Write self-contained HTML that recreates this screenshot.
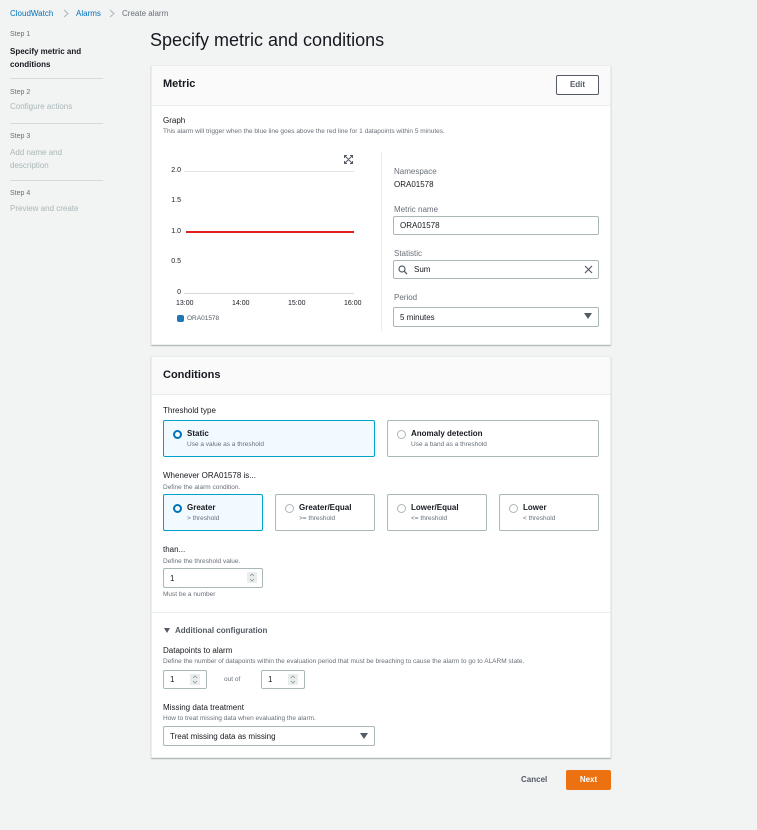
<!DOCTYPE html>
<html><head><meta charset="utf-8"><style>
*{box-sizing:border-box;margin:0;padding:0}
body{width:757px;height:830px;background:#f2f3f3;font-family:"Liberation Sans",sans-serif;color:#16191f;position:relative;overflow:hidden;font-size:8px}
.a{position:absolute;white-space:nowrap}
.lnk{color:#0073bb}
.g{color:#687078}
.lg{color:#aab7b8}
.b{font-weight:bold}
.panel{position:absolute;left:151px;width:460px;background:#fff;border:1px solid #eaeded;box-shadow:0 1px 1px rgba(0,28,36,.3)}
.ph{position:absolute;left:0;right:0;top:0;background:#fafafa;border-bottom:1px solid #eaeded}
.inp{position:absolute;border:1px solid #aab7b8;border-radius:2px;background:#fff;font-size:8px;padding-left:6px;display:flex;align-items:center}
.tile{position:absolute;border:1px solid #aab7b8;border-radius:2px;background:#fff;height:37px}
.tile.sel{border-color:#00a1c9;background:#f1faff}
.rad{position:absolute;left:9px;top:9px;width:9px;height:9px;border-radius:50%;border:1px solid #aab7b8;background:#fff}
.sel .rad{border:2.5px solid #0073bb}
.tt{position:absolute;left:23px;top:8px;font-size:8px;font-weight:bold;color:#16191f}
.ts{position:absolute;left:23px;top:20px;font-size:6.5px;color:#687078}
.spin{position:absolute;right:5px;top:3px;width:10px;height:11px;background:#eaeded}
.hl{position:absolute;left:184px;width:170px;height:1px;background:#e5e5e5}
.yl{position:absolute;font-size:7px;color:#16191f;text-align:right;width:12px;left:169px}
</style></head><body>
<div class="a lnk" style="left:10px;top:9px;font-size:8px">CloudWatch</div>
<svg class="a" style="left:63px;top:9px" width="6" height="9" viewBox="0 0 6 9"><path d="M1 1L5 4.5L1 8" fill="none" stroke="#aab7b8"/></svg>
<div class="a lnk" style="left:76px;top:9px;font-size:8px">Alarms</div>
<svg class="a" style="left:109px;top:9px" width="6" height="9" viewBox="0 0 6 9"><path d="M1 1L5 4.5L1 8" fill="none" stroke="#aab7b8"/></svg>
<div class="a g" style="left:122px;top:9px;font-size:8px">Create alarm</div>

<div class="a g" style="left:10px;top:31px;font-size:7px">Step 1</div>
<div class="a b" style="left:10px;top:45px;font-size:8px;line-height:13px">Specify metric and<br>conditions</div>
<div class="a" style="left:10px;top:78px;width:93px;height:1px;background:#d5dbdb"></div>
<div class="a g" style="left:10px;top:89px;font-size:7px">Step 2</div>
<div class="a lg" style="left:10px;top:102px;font-size:8px">Configure actions</div>
<div class="a" style="left:10px;top:123px;width:93px;height:1px;background:#d5dbdb"></div>
<div class="a g" style="left:10px;top:133px;font-size:7px">Step 3</div>
<div class="a lg" style="left:10px;top:146px;font-size:8px;line-height:13px">Add name and<br>description</div>
<div class="a" style="left:10px;top:180px;width:93px;height:1px;background:#d5dbdb"></div>
<div class="a g" style="left:10px;top:190px;font-size:7px">Step 4</div>
<div class="a lg" style="left:10px;top:204px;font-size:8px">Preview and create</div>

<div class="a" style="left:150px;top:30px;font-size:18px;color:#16191f">Specify metric and conditions</div>

<div class="panel" style="top:65px;height:280px">
 <div class="ph" style="height:40px"><div class="a b" style="left:11px;top:12px;font-size:11px">Metric</div></div>
 <div class="a b" style="left:404px;top:9px;width:43px;height:20px;border:1px solid #545b64;border-radius:2px;background:#fff;font-size:8px;color:#545b64;text-align:center;line-height:18px">Edit</div>
</div>
<div class="a" style="left:163px;top:116px;font-size:8px">Graph</div>
<div class="a g" style="left:163px;top:128px;font-size:6.5px">This alarm will trigger when the blue line goes above the red line for 1 datapoints within 5 minutes.</div>
<svg class="a" style="left:344px;top:155px" width="9" height="9" viewBox="0 0 9 9"><path d="M0.5 3V0.5H3M6 0.5H8.5V3M8.5 6V8.5H6M3 8.5H0.5V6M1 1L8 8M8 1L1 8" fill="none" stroke="#545b64" stroke-width="1"/></svg>
<div class="yl" style="top:167px">2.0</div><div class="hl" style="top:171px"></div>
<div class="yl" style="top:197px">1.5</div>
<div class="yl" style="top:228px">1.0</div><div class="a" style="left:186px;top:231px;width:168px;height:1.5px;background:#e02020"></div>
<div class="yl" style="top:258px">0.5</div>
<div class="yl" style="top:289px">0</div><div class="hl" style="top:293px;background:#d5dbdb"></div>
<div class="a" style="left:176px;top:300px;font-size:7px">13:00</div>
<div class="a" style="left:232px;top:300px;font-size:7px">14:00</div>
<div class="a" style="left:288px;top:300px;font-size:7px">15:00</div>
<div class="a" style="left:344px;top:300px;font-size:7px">16:00</div>
<div class="a" style="left:177px;top:315px;width:7px;height:7px;border-radius:2px;background:#1f77b4"></div>
<div class="a" style="left:187px;top:315px;font-size:6.5px;color:#545b64">ORA01578</div>
<div class="a" style="left:381px;top:152px;width:1px;height:179px;background:#eaeded"></div>
<div class="a g" style="left:394px;top:167px;font-size:8px">Namespace</div>
<div class="a" style="left:394px;top:180px;font-size:8px">ORA01578</div>
<div class="a g" style="left:394px;top:205px;font-size:8px">Metric name</div>
<div class="inp" style="left:393px;top:216px;width:206px;height:19px">ORA01578</div>
<div class="a g" style="left:394px;top:249px;font-size:8px">Statistic</div>
<div class="inp" style="left:393px;top:260px;width:206px;height:19px;padding-left:20px">Sum</div>
<svg class="a" style="left:398px;top:265px" width="10" height="10" viewBox="0 0 10 10"><circle cx="4" cy="4" r="3" fill="none" stroke="#545b64" stroke-width="1.2"/><path d="M6.2 6.2L9 9" stroke="#545b64" stroke-width="1.3"/></svg>
<svg class="a" style="left:584px;top:265px" width="9" height="9" viewBox="0 0 9 9"><path d="M1 1L8 8M8 1L1 8" stroke="#545b64" stroke-width="1.2"/></svg>
<div class="a g" style="left:394px;top:293px;font-size:8px">Period</div>
<div class="inp" style="left:393px;top:307px;width:206px;height:20px">5 minutes</div>
<div class="a" style="left:584px;top:313px;width:0;height:0;border-left:4px solid transparent;border-right:4px solid transparent;border-top:6px solid #545b64"></div>

<div class="panel" style="top:356px;height:402px">
 <div class="ph" style="height:38px"><div class="a b" style="left:11px;top:12px;font-size:11px">Conditions</div></div>
 <div class="a" style="left:0;right:0;top:255px;height:1px;background:#eaeded"></div>
</div>
<div class="a" style="left:163px;top:406px;font-size:8px">Threshold type</div>
<div class="tile sel" style="left:163px;top:420px;width:212px"><div class="rad"></div><div class="tt">Static</div><div class="ts">Use a value as a threshold</div></div>
<div class="tile" style="left:387px;top:420px;width:212px"><div class="rad"></div><div class="tt">Anomaly detection</div><div class="ts">Use a band as a threshold</div></div>
<div class="a" style="left:163px;top:471px;font-size:8px">Whenever ORA01578 is...</div>
<div class="a g" style="left:163px;top:484px;font-size:6.5px">Define the alarm condition.</div>
<div class="tile sel" style="left:163px;top:494px;width:100px"><div class="rad"></div><div class="tt">Greater</div><div class="ts">&gt; threshold</div></div>
<div class="tile" style="left:275px;top:494px;width:100px"><div class="rad"></div><div class="tt">Greater/Equal</div><div class="ts">&gt;= threshold</div></div>
<div class="tile" style="left:387px;top:494px;width:100px"><div class="rad"></div><div class="tt">Lower/Equal</div><div class="ts">&lt;= threshold</div></div>
<div class="tile" style="left:499px;top:494px;width:100px"><div class="rad"></div><div class="tt">Lower</div><div class="ts">&lt; threshold</div></div>
<div class="a" style="left:163px;top:545px;font-size:8px">than...</div>
<div class="a g" style="left:163px;top:558px;font-size:6.5px">Define the threshold value.</div>
<div class="inp" style="left:163px;top:568px;width:100px;height:20px">1<svg class="spin" viewBox="0 0 10 11"><path d="M3 4L5 2L7 4M3 7L5 9L7 7" fill="none" stroke="#879596" stroke-width=".8"/></svg></div>
<div class="a g" style="left:163px;top:591px;font-size:6.5px">Must be a number</div>
<div class="a" style="left:164px;top:628px;width:0;height:0;border-left:3px solid transparent;border-right:3px solid transparent;border-top:5px solid #545b64"></div>
<div class="a b" style="left:175px;top:626px;font-size:8px;color:#545b64">Additional configuration</div>
<div class="a" style="left:163px;top:646px;font-size:8px">Datapoints to alarm</div>
<div class="a g" style="left:163px;top:658px;font-size:6.5px">Define the number of datapoints within the evaluation period that must be breaching to cause the alarm to go to ALARM state.</div>
<div class="inp" style="left:163px;top:670px;width:44px;height:19px">1<svg class="spin" style="right:6px" viewBox="0 0 10 11"><path d="M3 4L5 2L7 4M3 7L5 9L7 7" fill="none" stroke="#879596" stroke-width=".8"/></svg></div>
<div class="a g" style="left:224px;top:676px;font-size:6.5px">out of</div>
<div class="inp" style="left:261px;top:670px;width:44px;height:19px">1<svg class="spin" style="right:6px" viewBox="0 0 10 11"><path d="M3 4L5 2L7 4M3 7L5 9L7 7" fill="none" stroke="#879596" stroke-width=".8"/></svg></div>
<div class="a" style="left:163px;top:703px;font-size:8px">Missing data treatment</div>
<div class="a g" style="left:163px;top:715px;font-size:6.5px">How to treat missing data when evaluating the alarm.</div>
<div class="inp" style="left:163px;top:726px;width:212px;height:20px">Treat missing data as missing</div>
<div class="a" style="left:360px;top:733px;width:0;height:0;border-left:4px solid transparent;border-right:4px solid transparent;border-top:6px solid #545b64"></div>

<div class="a b" style="left:521px;top:775px;font-size:8px;color:#545b64">Cancel</div>
<div class="a b" style="left:566px;top:770px;width:45px;height:20px;background:#ec7211;color:#fff;font-size:8px;text-align:center;line-height:20px;border-radius:2px">Next</div>
</body></html>
